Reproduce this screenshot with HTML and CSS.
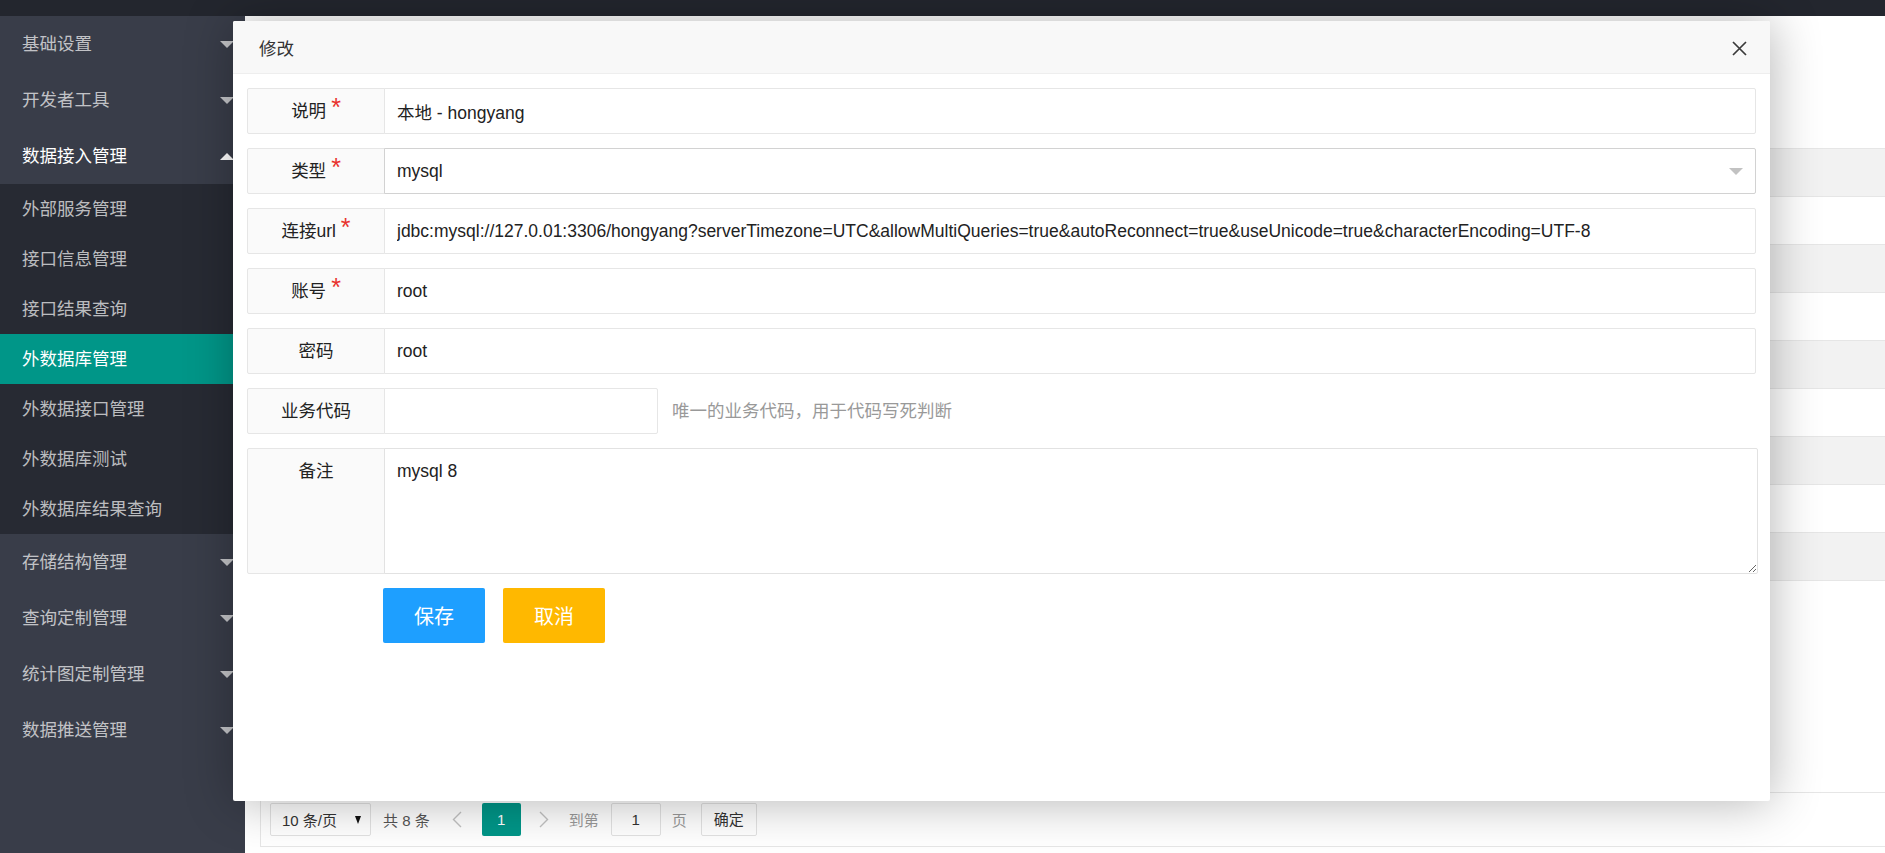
FILE: index.html
```html
<!DOCTYPE html>
<html lang="zh-CN">

<head>
    <meta charset="UTF-8">
    <meta name="viewport" content="width=device-width, initial-scale=1.0">
    <title>外数据库管理</title>
    <link rel="stylesheet" href="styles.css">
</head>

<body>
    <div class="topbar"></div>

    <div class="layout">
        <aside class="side-nav">
            <a class="nav-item"><span>基础设置</span><i class="nav-more"></i></a>
            <a class="nav-item"><span>开发者工具</span><i class="nav-more"></i></a>
            <a class="nav-item nav-open"><span>数据接入管理</span><i class="nav-more nav-more--up"></i></a>
            <div class="nav-child">
                <a class="nav-child__item">外部服务管理</a>
                <a class="nav-child__item">接口信息管理</a>
                <a class="nav-child__item">接口结果查询</a>
                <a class="nav-child__item is-active">外数据库管理</a>
                <a class="nav-child__item">外数据接口管理</a>
                <a class="nav-child__item">外数据库测试</a>
                <a class="nav-child__item">外数据库结果查询</a>
            </div>
            <a class="nav-item"><span>存储结构管理</span><i class="nav-more"></i></a>
            <a class="nav-item"><span>查询定制管理</span><i class="nav-more"></i></a>
            <a class="nav-item"><span>统计图定制管理</span><i class="nav-more"></i></a>
            <a class="nav-item"><span>数据推送管理</span><i class="nav-more"></i></a>
        </aside>

        <main class="content">
            <div class="toolbar"></div>

            <div class="data-table">
                <div class="data-table__main">
                    <div class="data-table__head"></div>
                    <div class="data-table__row"></div>
                    <div class="data-table__row data-table__row--even"></div>
                    <div class="data-table__row"></div>
                    <div class="data-table__row data-table__row--even"></div>
                    <div class="data-table__row"></div>
                    <div class="data-table__row data-table__row--even"></div>
                    <div class="data-table__row"></div>
                    <div class="data-table__row data-table__row--even"></div>
                </div>

                <div class="pager">
                    <div class="pager__limit">
                        <span>10 条/页</span>
                        <i class="pager__caret"></i>
                    </div>
                    <span class="pager__count">共 8 条</span>
                    <span class="pager__prev">
                        <svg width="10" height="17" viewBox="0 0 10 17"><path d="M9 1 L1.5 8.5 L9 16" fill="none" stroke="#c2c2c2" stroke-width="1.4"/></svg>
                    </span>
                    <span class="pager__curr">1</span>
                    <span class="pager__next">
                        <svg width="10" height="17" viewBox="0 0 10 17"><path d="M1 1 L8.5 8.5 L1 16" fill="none" stroke="#c2c2c2" stroke-width="1.4"/></svg>
                    </span>
                    <span class="pager__muted">到第</span>
                    <span class="pager__input">1</span>
                    <span class="pager__muted pager__unit">页</span>
                    <span class="pager__btn">确定</span>
                </div>
            </div>
        </main>
    </div>

    <div class="modal">
        <div class="modal__header">
            <span>修改</span>
            <svg class="modal__close" width="15" height="15" viewBox="0 0 15 15">
                <path d="M1 1 L14 14 M14 1 L1 14" stroke="#3a3a3a" stroke-width="1.7" />
            </svg>
        </div>

        <form class="modal__body">
            <div class="form-row">
                <label class="form-label">说明<em class="required">*</em></label>
                <input class="form-input" type="text" value="本地 - hongyang">
            </div>

            <div class="form-row">
                <label class="form-label">类型<em class="required">*</em></label>
                <div class="form-input form-select">
                    <span>mysql</span>
                    <i class="form-select__arrow"></i>
                </div>
            </div>

            <div class="form-row">
                <label class="form-label">连接url<em class="required">*</em></label>
                <input class="form-input" type="text" value="jdbc:mysql://127.0.01:3306/hongyang?serverTimezone=UTC&amp;allowMultiQueries=true&amp;autoReconnect=true&amp;useUnicode=true&amp;characterEncoding=UTF-8">
            </div>

            <div class="form-row">
                <label class="form-label">账号<em class="required">*</em></label>
                <input class="form-input" type="text" value="root">
            </div>

            <div class="form-row">
                <label class="form-label">密码</label>
                <input class="form-input" type="text" value="root">
            </div>

            <div class="form-row">
                <label class="form-label">业务代码</label>
                <input class="form-input form-input--short" type="text" value="">
                <span class="form-aux">唯一的业务代码，用于代码写死判断</span>
            </div>

            <div class="form-row form-row--text">
                <label class="form-label">备注</label>
                <textarea class="form-textarea">mysql 8</textarea>
            </div>

            <div class="form-actions">
                <button type="button" class="btn btn--normal">保存</button>
                <button type="button" class="btn btn--warm">取消</button>
            </div>
        </form>
    </div>
</body>

</html>
```

FILE: styles.css
```css
html,
body {
    margin: 0;
    height: 100%;
    overflow: hidden;
}

body {
    background-color: #fff;
    color: #333;
    font-family: "Liberation Sans", "Noto Sans CJK SC", sans-serif;
    font-size: 17.5px;
}

.topbar {
    height: 16px;
    background-color: #23262e;
}

.layout {
    display: flex;
    height: calc(100% - 16px);
}

/* side menu */

.side-nav {
    width: 245px;
    flex-shrink: 0;
    background-color: #393d49;
}

.nav-item {
    display: flex;
    align-items: center;
    justify-content: space-between;
    height: 56px;
    padding: 0 11px 0 22px;
    color: rgba(255, 255, 255, 0.7);
    line-height: 56px;
}

.nav-open {
    color: #fff;
}

.nav-more {
    width: 0;
    height: 0;
    border-left: 7px solid transparent;
    border-right: 7px solid transparent;
    border-top: 7px solid rgba(255, 255, 255, 0.7);
}

.nav-more--up {
    border-top: none;
    border-bottom: 7px solid #fff;
}

.nav-child {
    background-color: rgba(0, 0, 0, 0.3);
}

.nav-child__item {
    display: block;
    height: 50px;
    line-height: 50px;
    padding-left: 22px;
    color: rgba(255, 255, 255, 0.7);
}

.nav-child__item.is-active {
    background-color: #009688;
    color: #fff;
}

/* page content behind the dialog */

.content {
    flex: 1;
    overflow: hidden;
    padding-left: 15px;
}

.toolbar {
    height: 132px;
}

.data-table {
    width: calc(100% + 10px);
    border: 1px solid #e6e6e6;
    border-bottom: none;
}

.data-table__main {
    height: 643px;
}

.data-table__head,
.data-table__row {
    height: 47px;
    border-bottom: 1px solid #e6e6e6;
}

.data-table__head,
.data-table__row--even {
    background-color: #f2f2f2;
}

.pager {
    display: flex;
    align-items: center;
    height: 53px;
    padding-left: 9px;
    border-top: 1px solid #e6e6e6;
    border-bottom: 1px solid #e6e6e6;
    font-size: 15px;
}

.pager__limit {
    display: flex;
    align-items: center;
    justify-content: space-between;
    box-sizing: border-box;
    width: 101px;
    height: 33px;
    padding: 0 9px 0 11px;
    border: 1px solid #e2e2e2;
    border-radius: 2px;
}

.pager__caret {
    width: 0;
    height: 0;
    border-left: 3.5px solid transparent;
    border-right: 3.5px solid transparent;
    border-top: 8px solid #111;
}

.pager__count {
    margin-left: 12px;
    color: #555;
}

.pager__prev,
.pager__next {
    display: flex;
    justify-content: center;
    width: 39px;
}

.pager__prev {
    margin-left: 8px;
}

.pager__next {
    width: 46px;
}

.pager__curr {
    margin-left: 5px;
    width: 39px;
    height: 33px;
    line-height: 33px;
    text-align: center;
    color: #fff;
    background-color: #009688;
    border-radius: 2px;
}

.pager__muted {
    margin-left: 2px;
    color: #999;
}

.pager__input {
    box-sizing: border-box;
    width: 50px;
    height: 33px;
    margin-left: 12px;
    line-height: 31px;
    text-align: center;
    border: 1px solid #e2e2e2;
    border-radius: 2px;
}

.pager__unit {
    margin-left: 11px;
}

.pager__btn {
    box-sizing: border-box;
    width: 56px;
    height: 33px;
    margin-left: 14px;
    line-height: 31px;
    text-align: center;
    border: 1px solid #e2e2e2;
    border-radius: 2px;
}

/* edit dialog */

.modal {
    position: absolute;
    left: 233px;
    top: 21px;
    width: 1537px;
    height: 780px;
    background-color: #fff;
    border-radius: 2px;
    box-shadow: 1px 1px 50px rgba(0, 0, 0, 0.3);
}

.modal__header {
    display: flex;
    align-items: center;
    justify-content: space-between;
    box-sizing: border-box;
    height: 53px;
    padding: 0 23px 0 26px;
    background-color: #f8f8f8;
    border-bottom: 1px solid #eee;
    border-radius: 2px 2px 0 0;
}

.modal__close {
    margin-top: 2px;
}

.modal__body {
    display: flex;
    flex-direction: column;
    gap: 14px;
    padding: 14px;
}

.form-row {
    display: flex;
    height: 46px;
}

.form-label {
    box-sizing: border-box;
    width: 138px;
    flex-shrink: 0;
    border: 1px solid #e6e6e6;
    border-radius: 2px 0 0 2px;
    background-color: #fafafa;
    line-height: 44px;
    text-align: center;
    color: #222;
}

.required {
    display: inline-block;
    margin-left: 5px;
    font-style: normal;
    font-size: 25px;
    line-height: 0;
    vertical-align: 1px;
    color: #e8322e;
}

.form-input {
    box-sizing: border-box;
    flex: 1;
    margin: 0 0 0 -1px;
    padding: 0 12px;
    border: 1px solid #e6e6e6;
    border-radius: 0 2px 2px 0;
    outline: none;
    font: inherit;
    color: #222;
    background-color: #fff;
}

.form-input--short {
    flex: none;
    width: 274px;
}

.form-select {
    display: flex;
    align-items: center;
    justify-content: space-between;
    border-color: #d2d2d2;
}

.form-select__arrow {
    width: 0;
    height: 0;
    border-left: 7px solid transparent;
    border-right: 7px solid transparent;
    border-top: 7px solid #c2c2c2;
}

.form-aux {
    margin-left: 14px;
    line-height: 46px;
    color: #999;
}

.form-row--text {
    height: 126px;
    margin-right: -2px;
}

.form-row--text .form-label {
    padding-top: 10px;
    line-height: 25px;
}

.form-textarea {
    box-sizing: border-box;
    flex: 1;
    margin-left: -1px;
    padding: 10px 12px;
    border: 1px solid #e2e2e2;
    border-radius: 0 2px 2px 0;
    outline: none;
    resize: vertical;
    font: inherit;
    line-height: 25px;
    color: #222;
}

.form-actions {
    display: flex;
    gap: 18px;
    padding-left: 136px;
}

.btn {
    height: 55px;
    padding: 0 31px;
    border: none;
    border-radius: 2px;
    font-family: inherit;
    font-size: 20px;
    color: #fff;
    cursor: pointer;
}

.btn--normal {
    background-color: #1e9fff;
}

.btn--warm {
    background-color: #ffb800;
}
```
